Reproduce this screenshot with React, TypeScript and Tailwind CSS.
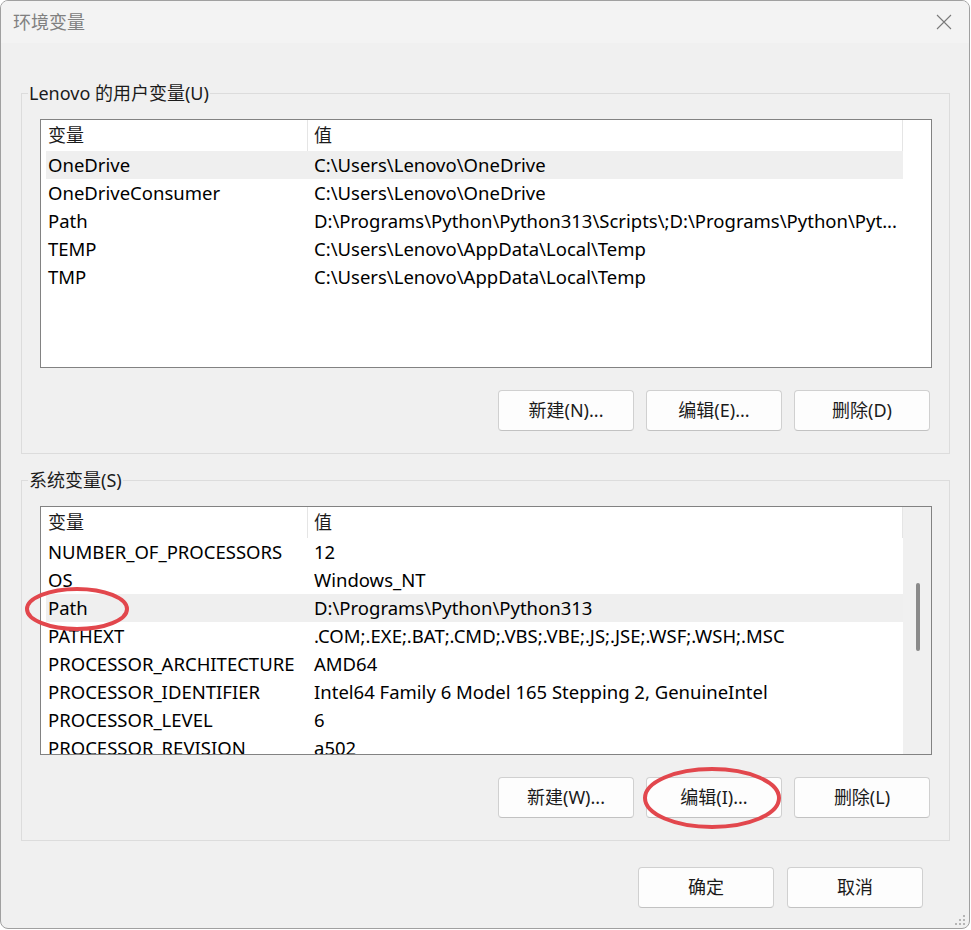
import React from 'react';

type Row = { name: string; value: string; selected?: boolean };

const userVars: Row[] = [
  { name: 'OneDrive', value: 'C:\\Users\\Lenovo\\OneDrive', selected: true },
  { name: 'OneDriveConsumer', value: 'C:\\Users\\Lenovo\\OneDrive' },
  { name: 'Path', value: 'D:\\Programs\\Python\\Python313\\Scripts\\;D:\\Programs\\Python\\Pyt...' },
  { name: 'TEMP', value: 'C:\\Users\\Lenovo\\AppData\\Local\\Temp' },
  { name: 'TMP', value: 'C:\\Users\\Lenovo\\AppData\\Local\\Temp' },
];

const systemVars: Row[] = [
  { name: 'NUMBER_OF_PROCESSORS', value: '12' },
  { name: 'OS', value: 'Windows_NT' },
  { name: 'Path', value: 'D:\\Programs\\Python\\Python313', selected: true },
  { name: 'PATHEXT', value: '.COM;.EXE;.BAT;.CMD;.VBS;.VBE;.JS;.JSE;.WSF;.WSH;.MSC' },
  { name: 'PROCESSOR_ARCHITECTURE', value: 'AMD64' },
  { name: 'PROCESSOR_IDENTIFIER', value: 'Intel64 Family 6 Model 165 Stepping 2, GenuineIntel' },
  { name: 'PROCESSOR_LEVEL', value: '6' },
  { name: 'PROCESSOR_REVISION', value: 'a502' },
];

function Button({ children }: { children: React.ReactNode }) {
  return (
    <button className="w-[136px] h-[41px] rounded-[4px] border border-[#d0d0d0] border-b-[#c2c2c2] bg-[#fdfdfd] text-[18px] text-[#1b1b1b] flex items-center justify-center">
      {children}
    </button>
  );
}

function VarList({ rows, scroll }: { rows: Row[]; scroll?: boolean }) {
  return (
    <div className="h-[249px] border border-[#828282] bg-white flex overflow-hidden">
      <div className="w-[862px] shrink-0 flex flex-col">
        {/* column header */}
        <div className="h-[31px] shrink-0 flex items-center text-[#1b1b1b]">
          <div className="w-[267px] h-full pl-[7px] flex items-center border-r border-[#e5e5e5]">变量</div>
          <div className="w-[595px] h-full pl-[6px] flex items-center border-r border-[#e5e5e5]">值</div>
        </div>
        {rows.map((r) => (
          <div
            key={r.name}
            className={`h-[28px] shrink-0 ml-[5px] w-[857px] flex items-center text-[18.5px] text-black ${r.selected ? 'bg-[#efefef]' : ''}`}
          >
            <div className="w-[262px] pl-[2px] whitespace-nowrap overflow-hidden">{r.name}</div>
            <div className="flex-1 pl-[6px] whitespace-nowrap overflow-hidden">{r.value}</div>
          </div>
        ))}
      </div>
      {scroll ? (
        <div className="flex-1 bg-[#f0f0f0] flex justify-center">
          <div className="w-[4px] h-[68px] mt-[76px] ml-[1px] rounded-full bg-[#8a8a8a]" />
        </div>
      ) : (
        <div className="flex-1" />
      )}
    </div>
  );
}

function Group({
  label,
  rows,
  buttons,
  scroll,
  className,
}: {
  label: string;
  rows: Row[];
  buttons: string[];
  scroll?: boolean;
  className?: string;
}) {
  return (
    <fieldset className={`border border-[#dcdcdc] p-0 m-0 ${className ?? ''}`}>
      <legend className="ml-[6px] px-[1px] leading-[24px] text-[#1b1b1b]">{label}</legend>
      <div className="pt-[14px] pb-[22px] pl-[18px] pr-[17px]">
        <VarList rows={rows} scroll={scroll} />
        <div className="mt-[22px] flex justify-end gap-[12px] pr-[2px]">
          {buttons.map((b) => (
            <Button key={b}>{b}</Button>
          ))}
        </div>
      </div>
    </fieldset>
  );
}

export default function App() {
  return (
    <div className="w-[971px] h-[930px] bg-white font-['Noto_Sans','Noto_Sans_CJK_SC',sans-serif] text-[18px]">
      <div className="relative w-[970px] h-[929px] border border-[#a0a0a0] rounded-[8px] bg-[#f0f0f0] overflow-hidden flex flex-col">
        {/* title bar */}
        <div className="h-[42px] shrink-0 bg-[#f3f3f3] flex items-center justify-between pl-[12px] pr-[17px]">
          <span className="text-[18px] text-[#808080]">环境变量</span>
          <svg width="16" height="16" viewBox="0 0 16 16" className="text-[#7a7a7a]">
            <path d="M1 1 L15 15 M15 1 L1 15" stroke="currentColor" strokeWidth="1.1" fill="none" />
          </svg>
        </div>

        <div className="flex flex-col pl-[20px] pr-[19px]">
          <Group
            className="mt-[38px]"
            label="Lenovo 的用户变量(U)"
            rows={userVars}
            buttons={['新建(N)...', '编辑(E)...', '删除(D)']}
          />
          <Group
            className="mt-[14px]"
            label="系统变量(S)"
            rows={systemVars}
            scroll
            buttons={['新建(W)...', '编辑(I)...', '删除(L)']}
          />
          <div className="mt-[26px] flex justify-end gap-[13px] pr-[27px]">
            <Button>确定</Button>
            <Button>取消</Button>
          </div>
        </div>

        {/* size grip */}
        <svg width="12" height="12" viewBox="0 0 12 12" className="absolute right-[3px] bottom-[2px] text-[#b5b5b5]">
          {[
            [10, 2],
            [6, 6],
            [10, 6],
            [2, 10],
            [6, 10],
            [10, 10],
          ].map(([x, y]) => (
            <rect key={`${x}-${y}`} x={x - 1} y={y - 1} width="2" height="2" fill="currentColor" />
          ))}
        </svg>

        {/* red markers */}
        <svg className="absolute inset-0 pointer-events-none" width="970" height="929">
          <ellipse cx="76" cy="608" rx="50" ry="20" fill="none" stroke="#e2474d" strokeWidth="4" />
          <ellipse cx="711" cy="797" rx="67" ry="29" fill="none" stroke="#e2474d" strokeWidth="4" />
        </svg>
      </div>
    </div>
  );
}
